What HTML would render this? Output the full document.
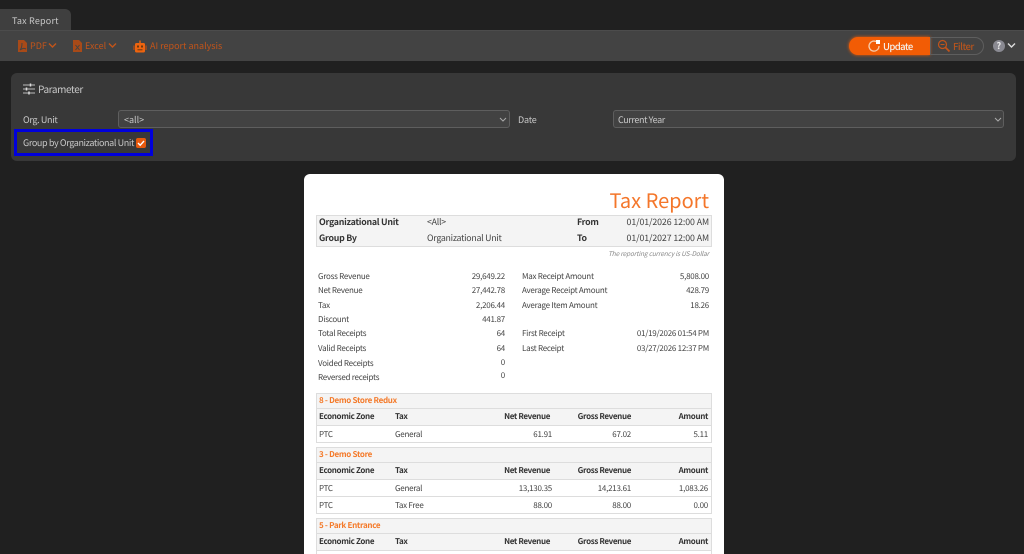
<!DOCTYPE html>
<html><head><meta charset="utf-8"><style>
html,body{margin:0;padding:0;width:1024px;height:554px;overflow:hidden;background:#202020}
body{position:relative;font-family:"Noto Sans CJK JP","Liberation Sans",sans-serif;font-size:8px;color:#444;text-rendering:geometricPrecision}
div,svg{position:absolute}
#w{left:0;top:0;width:1024px;height:554px;overflow:hidden;filter:blur(.3px)}
.t{white-space:nowrap;line-height:12px;height:12px;letter-spacing:-.25px}
.r{text-align:right;width:120px}
.b{font-weight:700;color:#333;letter-spacing:-.35px}
.m{font-size:8.800px;letter-spacing:-.26px}
.d{letter-spacing:-.1px}
.lt{color:#c8c8c8;font-size:9px;letter-spacing:0}
.or{color:#c2541a;font-size:9px;letter-spacing:0}
.sel{background:#424242;border:1px solid #5e5e5e;border-radius:3px;box-sizing:border-box;height:18px}
.box{background:#fff;border:1px solid #ddd;box-sizing:border-box;left:316px;width:396px}
.bg{background:#f4f4f4;left:317px;width:394px}
.ln{background:#ddd;left:317px;width:394px;height:1px}
.h{color:#f47a2a;font-weight:700;left:319px;letter-spacing:-.3px}
</style></head><body><div id="w">
<div style="left:0;top:9px;width:71px;height:21px;background:#3f3f3f;border-top-right-radius:6px"></div>
<div class="t lt" style="left:12px;top:15px;letter-spacing:.2px">Tax Report</div>
<div style="left:0;top:30px;width:1024px;height:31px;background:#434343;border-top:1px solid #4c4c4c;box-sizing:border-box"></div>

<svg style="left:17px;top:39px" width="11" height="14" viewBox="0 0 11 14"><path d="M1 1h6l3 3v9H1z" fill="#a84a18"/><path d="M3 11c2-2 2-5 2-7M3 11c3-2 4-2 6-1" stroke="#434343" fill="none"/></svg>
<div class="t or" style="left:30px;top:40px">PDF</div>
<svg style="left:48px;top:42px" width="9" height="7" viewBox="0 0 9 7"><path d="M1 1.500l3.500 3.500 3.500-3.500" stroke="#c2541a" stroke-width="1.400" fill="none"/></svg>
<svg style="left:72px;top:39px" width="11" height="14" viewBox="0 0 11 14"><path d="M1 1h6l3 3v9H1z" fill="#a84a18"/><path d="M3.500 6l4 5M7.500 6l-4 5" stroke="#434343" fill="none"/></svg>
<div class="t or" style="left:85px;top:40px">Excel</div>
<svg style="left:108px;top:42px" width="9" height="7" viewBox="0 0 9 7"><path d="M1 1.500l3.500 3.500 3.500-3.500" stroke="#c2541a" stroke-width="1.400" fill="none"/></svg>
<svg style="left:133px;top:40px" width="14" height="13" viewBox="0 0 14 13"><rect x="2" y="3" width="10" height="9.500" rx="1.500" fill="#ee640f"/><rect x="0.300" y="5.500" width="1.300" height="4.500" fill="#b04c16"/><rect x="12.400" y="5.500" width="1.300" height="4.500" fill="#b04c16"/><rect x="6.300" y="0.500" width="1.400" height="3" fill="#ee640f"/><rect x="4" y="5.500" width="2" height="2" fill="#6a3810"/><rect x="8" y="5.500" width="2" height="2" fill="#6a3810"/><rect x="4.500" y="9.300" width="5" height="1" fill="#6a3810"/></svg>
<div class="t or" style="left:150px;top:40px">AI report analysis</div>

<div style="left:849px;top:37px;width:81px;height:18px;background:#f25c05;border-radius:9px 0 0 9px;box-shadow:0 0 3px #f25c05"></div>
<svg style="left:867px;top:39px" width="14" height="14" viewBox="0 0 14 14"><path d="M9 2.500A5 5 0 1 0 12 7" stroke="#f7c9a8" stroke-width="1.300" fill="none"/><path d="M9 1h4v4H9z" fill="#fff"/></svg>
<div class="t" style="left:883px;top:40px;color:#f5f0ea;font-size:9.500px;font-weight:500;letter-spacing:-.6px">Update</div>
<div style="left:930px;top:37px;width:54px;height:18px;border:1px solid #5e5e5e;border-radius:0 9px 9px 0;box-sizing:border-box"></div>
<svg style="left:937px;top:39px" width="14" height="14" viewBox="0 0 14 14"><circle cx="5.500" cy="5.500" r="4" stroke="#c2541a" stroke-width="1.200" fill="none"/><path d="M3.500 5.500h4" stroke="#c2541a"/><path d="M8.500 8.500l4 4" stroke="#c2541a" stroke-width="1.800"/></svg>
<div class="t" style="left:953px;top:40px;color:#b5541e;font-size:9.500px;font-weight:500;letter-spacing:-.5px">Filter</div>
<div style="left:993px;top:40px;width:12px;height:12px;border-radius:50%;background:#8a8a92"></div>
<div class="t" style="left:996.500px;top:40px;color:#eee;font-weight:700;font-size:9px">?</div>
<svg style="left:1007px;top:42px" width="9" height="7" viewBox="0 0 9 7"><path d="M1 1.500l3.500 3.500 3.500-3.500" stroke="#ddd" stroke-width="1.400" fill="none"/></svg>

<div style="left:11px;top:73px;width:1005px;height:88px;background:#383838;border-radius:6px"></div>
<svg style="left:23px;top:83px" width="12" height="12" viewBox="0 0 12 12"><path d="M0 2h12M0 6h12M0 10h12" stroke="#bbb"/><path d="M7.500 .5v3M3.500 4.500v3M6 8.500v3" stroke="#ddd" stroke-width="1.500"/></svg>
<div class="t lt" style="left:38px;top:83px;font-size:10px;letter-spacing:-.4px">Parameter</div>
<div class="t lt" style="left:23px;top:114px;letter-spacing:-.35px">Org. Unit</div>
<div class="sel" style="left:118px;top:110px;width:392px"></div>
<div class="t lt" style="left:124px;top:114px">&lt;all&gt;</div>
<svg style="left:499px;top:117px" width="8" height="6" viewBox="0 0 8 6"><path d="M1 1l3 3 3-3" stroke="#aaa" fill="none"/></svg>
<div class="t lt" style="left:518px;top:114px;letter-spacing:-.2px">Date</div>
<div class="sel" style="left:613px;top:110px;width:391px"></div>
<div class="t lt" style="left:618px;top:114px;letter-spacing:-.4px">Current Year</div>
<svg style="left:994px;top:117px" width="8" height="6" viewBox="0 0 8 6"><path d="M1 1l3 3 3-3" stroke="#aaa" fill="none"/></svg>
<div style="left:14px;top:129px;width:139px;height:27px;border:3px solid #0000dc;box-sizing:border-box"></div>
<div class="t lt" style="left:23px;top:137px;letter-spacing:-.38px">Group by Organizational Unit</div>
<div style="left:136px;top:138px;width:10px;height:10px;background:#e8590c;border-radius:2px"></div>
<svg style="left:136px;top:138px" width="10" height="10" viewBox="0 0 10 10"><path d="M2 5l2.200 2.200L8 3" stroke="#fff" stroke-width="1.400" fill="none"/></svg>

<div style="left:304px;top:174px;width:420px;height:390px;background:#fff;border-radius:6px"></div>
<div class="t" style="left:509px;width:200px;top:187px;height:26px;line-height:26px;text-align:right;font-size:20px;color:#f4762a;letter-spacing:0">Tax Report</div>
<div style="left:316px;top:215px;width:396px;height:32px;background:#f4f4f4;border:1px solid #ddd;box-sizing:border-box"></div>
<div class="t b m" style="left:319px;top:216px">Organizational Unit</div>
<div class="t m" style="left:427px;top:216px">&lt;All&gt;</div>
<div class="t b m" style="left:577px;top:216px">From</div>
<div class="t r m d" style="left:589px;top:216px">01/01/2026 12:00 AM</div>
<div class="t b m" style="left:319px;top:232px">Group By</div>
<div class="t m" style="left:427px;top:232px">Organizational Unit</div>
<div class="t b m" style="left:577px;top:232px">To</div>
<div class="t r m d" style="left:589px;top:232px">01/01/2027 12:00 AM</div>
<div class="t r" style="left:549px;width:160px;top:247px;font-size:6.500px;font-style:italic;color:#888;letter-spacing:-.15px">The reporting currency is US-Dollar</div>

<div class="t" style="left:318px;top:271px">Gross Revenue</div><div class="t r" style="left:385px;top:271px">29,649.22</div>
<div class="t" style="left:318px;top:285px">Net Revenue</div><div class="t r" style="left:385px;top:285px">27,442.78</div>
<div class="t" style="left:318px;top:300px">Tax</div><div class="t r" style="left:385px;top:300px">2,206.44</div>
<div class="t" style="left:318px;top:314px">Discount</div><div class="t r" style="left:385px;top:314px">441.87</div>
<div class="t" style="left:318px;top:328px">Total Receipts</div><div class="t r" style="left:385px;top:328px">64</div>
<div class="t" style="left:318px;top:343px">Valid Receipts</div><div class="t r" style="left:385px;top:343px">64</div>
<div class="t" style="left:318px;top:358px">Voided Receipts</div><div class="t r" style="left:385px;top:357px">0</div>
<div class="t" style="left:318px;top:372px">Reversed receipts</div><div class="t r" style="left:385px;top:370px">0</div>
<div class="t" style="left:522px;top:271px">Max Receipt Amount</div><div class="t r" style="left:589px;top:271px">5,808.00</div>
<div class="t" style="left:522px;top:285px">Average Receipt Amount</div><div class="t r" style="left:589px;top:285px">428.79</div>
<div class="t" style="left:522px;top:300px">Average Item Amount</div><div class="t r" style="left:589px;top:300px">18.26</div>
<div class="t" style="left:522px;top:328px">First Receipt</div><div class="t r" style="left:589px;top:328px">01/19/2026 01:54 PM</div>
<div class="t" style="left:522px;top:343px">Last Receipt</div><div class="t r" style="left:589px;top:343px">03/27/2026 12:37 PM</div>

<div class="box" style="top:393px;height:50px"></div>
<div class="bg" style="top:394px;height:32px"></div>
<div class="ln" style="top:408px"></div><div class="ln" style="top:425px"></div>
<div class="t h" style="top:395px">8 - Demo Store Redux</div>
<div class="t b" style="left:319px;top:411px">Economic Zone</div><div class="t b" style="left:395px;top:411px">Tax</div>
<div class="t r b" style="left:430px;top:411px">Net Revenue</div><div class="t r b" style="left:511px;top:411px">Gross Revenue</div><div class="t r b" style="left:588px;top:411px">Amount</div>
<div class="t" style="left:319px;top:429px">PTC</div><div class="t" style="left:395px;top:429px">General</div>
<div class="t r" style="left:432px;top:429px">61.91</div><div class="t r" style="left:511px;top:429px">67.02</div><div class="t r" style="left:588px;top:429px">5.11</div>

<div class="box" style="top:447px;height:67px"></div>
<div class="bg" style="top:448px;height:32px"></div>
<div class="ln" style="top:462px"></div><div class="ln" style="top:479px"></div><div class="ln" style="top:496px"></div>
<div class="t h" style="top:449px">3 - Demo Store</div>
<div class="t b" style="left:319px;top:465px">Economic Zone</div><div class="t b" style="left:395px;top:465px">Tax</div>
<div class="t r b" style="left:430px;top:465px">Net Revenue</div><div class="t r b" style="left:511px;top:465px">Gross Revenue</div><div class="t r b" style="left:588px;top:465px">Amount</div>
<div class="t" style="left:319px;top:483px">PTC</div><div class="t" style="left:395px;top:483px">General</div>
<div class="t r" style="left:432px;top:483px">13,130.35</div><div class="t r" style="left:511px;top:483px">14,213.61</div><div class="t r" style="left:588px;top:483px">1,083.26</div>
<div class="t" style="left:319px;top:500px">PTC</div><div class="t" style="left:395px;top:500px">Tax Free</div>
<div class="t r" style="left:432px;top:500px">88.00</div><div class="t r" style="left:511px;top:500px">88.00</div><div class="t r" style="left:588px;top:500px">0.00</div>

<div class="box" style="top:518px;height:50px"></div>
<div class="bg" style="top:519px;height:32px"></div>
<div class="ln" style="top:533px"></div><div class="ln" style="top:550px"></div>
<div class="t h" style="top:520px">5 - Park Entrance</div>
<div class="t b" style="left:319px;top:536px">Economic Zone</div><div class="t b" style="left:395px;top:536px">Tax</div>
<div class="t r b" style="left:430px;top:536px">Net Revenue</div><div class="t r b" style="left:511px;top:536px">Gross Revenue</div><div class="t r b" style="left:588px;top:536px">Amount</div>
</div></body></html>
